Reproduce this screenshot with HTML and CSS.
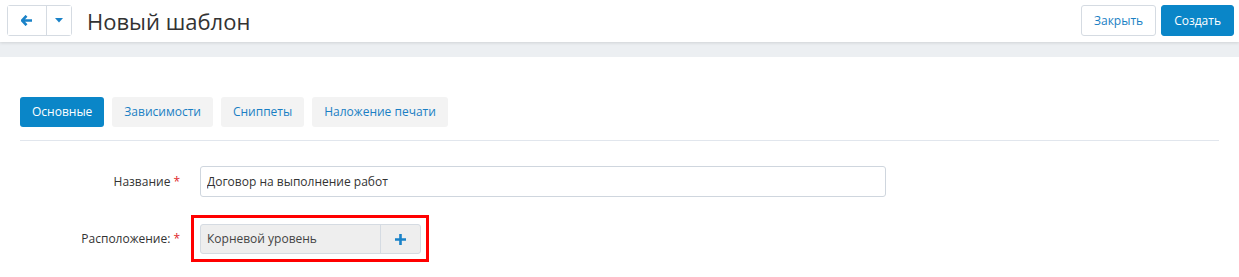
FILE: index.html
```html
<!DOCTYPE html>
<html lang="ru">
<head>
  <meta charset="UTF-8">
  <title>Новый шаблон</title>
  <link rel="stylesheet" href="styles.css">
</head>
<body>
  <header class="topbar">
    <div class="topbar-left">
      <div class="btn-group">
        <button class="btn-nav btn-back">
          <svg width="12" height="11" viewBox="0 0 12 11"><path d="M5.5 0.8 L1 5.5 L5.5 10.2 M1.2 5.5 H11" fill="none" stroke="#1a82c8" stroke-width="2.6" stroke-linejoin="miter"/></svg>
        </button>
        <button class="btn-nav btn-caret">
          <svg width="8" height="5" viewBox="0 0 8 5"><path d="M0 0 H8 L4 4.5 Z" fill="#1a82c8"/></svg>
        </button>
      </div>
      <h1 class="page-title">Новый шаблон</h1>
    </div>
    <div class="topbar-right">
      <button class="btn btn-default">Закрыть</button>
      <button class="btn btn-primary">Создать</button>
    </div>
  </header>
  <div class="band"></div>
  <main class="panel">
    <ul class="tabs">
      <li class="tab active">Основные</li>
      <li class="tab">Зависимости</li>
      <li class="tab">Сниппеты</li>
      <li class="tab">Наложение печати</li>
    </ul>
    <form class="form">
      <div class="form-row">
        <label class="form-label">Название<span class="req">*</span></label>
        <input class="form-input" type="text" value="Договор на выполнение работ">
      </div>
      <div class="form-row row-location">
        <label class="form-label">Расположение:<span class="req">*</span></label>
        <div class="highlight">
          <div class="input-group">
            <span class="input-static">Корневой уровень</span>
            <button type="button" class="btn-add">
              <svg width="11" height="11" viewBox="0 0 11 11"><path d="M5.5 0 V11 M0 5.5 H11" stroke="#1a82c8" stroke-width="2.6"/></svg>
            </button>
          </div>
        </div>
      </div>
    </form>
  </main>
</body>
</html>
```

FILE: styles.css
```css
body {
  margin: 0;
  background: #fff;
  font-family: 'Open Sans', sans-serif;
  color: #333;
  font-size: 12px;
}

button {
  font-family: inherit;
  cursor: pointer;
}

.topbar {
  display: flex;
  justify-content: space-between;
  align-items: flex-start;
  height: 42px;
  padding: 5px 5px 0 7px;
  box-sizing: border-box;
  background: #fff;
  box-shadow: 0 1px 3px rgba(0, 0, 0, 0.12);
  position: relative;
}

.topbar-left {
  display: flex;
  align-items: center;
}

.btn-group {
  display: flex;
  border: 1px solid #d5dbe2;
  border-radius: 3px;
  height: 31px;
  box-sizing: border-box;
}

.btn-nav {
  display: flex;
  align-items: center;
  justify-content: center;
  background: #fff;
  border: 0;
  padding: 0;
}

.btn-back {
  width: 39px;
  border-right: 1px solid #d5dbe2;
}

.btn-caret {
  width: 24px;
}

.page-title {
  margin: 0 0 0 15px;
  font-size: 22px;
  font-weight: normal;
  color: #333;
  line-height: 30px;
}

.topbar-right {
  display: flex;
  gap: 5px;
}

.btn {
  height: 31px;
  padding: 0 12px;
  font-size: 12px;
  border-radius: 3px;
  border: 1px solid transparent;
}

.btn-default {
  background: #fff;
  border-color: #d5dbe2;
  color: #1a7fc4;
}

.btn-primary {
  background: #0a86c8;
  border-color: #0a86c8;
  color: #fff;
}

.band {
  height: 15px;
  background: #eceff2;
}

.panel {
  padding: 40px 20px 20px;
}

.tabs {
  display: flex;
  gap: 8px;
  list-style: none;
  margin: 0;
  padding: 0 0 13px;
  border-bottom: 1px solid #e1e6ed;
}

.tab {
  height: 30px;
  line-height: 30px;
  padding: 0 12px;
  background: #f3f3f3;
  color: #1a7fc4;
  border-radius: 3px;
}

.tab.active {
  background: #0a86c8;
  color: #fff;
}

.form {
  padding-top: 25px;
}

.form-row {
  display: flex;
  align-items: center;
}

.row-location {
  margin-top: 18px;
}

.form-label {
  width: 160px;
  padding-right: 20px;
  text-align: right;
  color: #333;
}

.req {
  color: #e0262b;
  margin-left: 3px;
}

.form-input {
  width: 686px;
  height: 31px;
  box-sizing: border-box;
  border: 1px solid #cfd6de;
  border-radius: 3px;
  padding: 0 6px;
  font-family: inherit;
  font-size: 12px;
  color: #333;
}

.highlight {
  border: 3px solid #ff0000;
  padding: 6px 5px 5px 6px;
  margin-left: -9px;
}

.input-group {
  display: flex;
  height: 30px;
  box-sizing: border-box;
  border: 1px solid #d5dbe2;
  border-radius: 3px;
  background: #eeeeee;
}

.input-static {
  width: 173px;
  padding-left: 6px;
  line-height: 28px;
  color: #444;
  border-right: 1px solid #d5dbe2;
}

.btn-add {
  width: 39px;
  border: 0;
  background: transparent;
  display: flex;
  align-items: center;
  justify-content: center;
  padding: 0;
}
```
